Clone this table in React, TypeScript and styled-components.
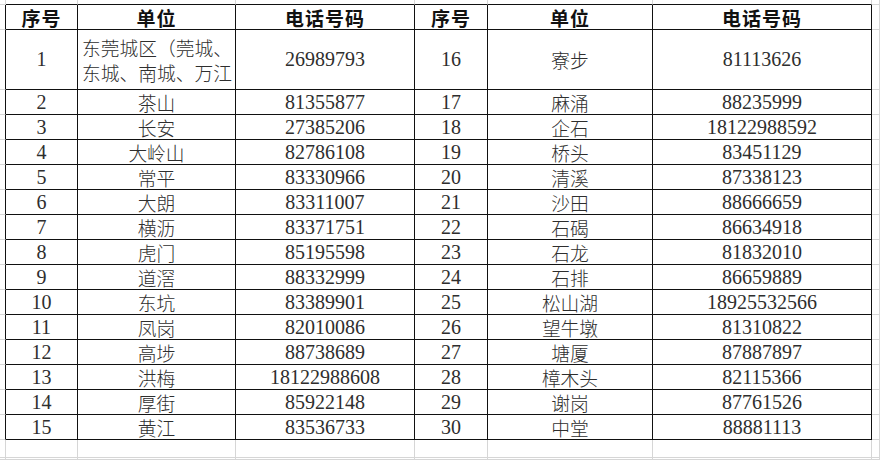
import styled, { createGlobalStyle } from "styled-components";

const GlobalStyle = createGlobalStyle`
  html, body {
    margin: 0;
    padding: 0;
    background: #ffffff;
  }
`;

type Entry = { no: number; unit: string; phone: string };

const left: Entry[] = [
  { no: 1, unit: "东莞城区（莞城、东城、南城、万江", phone: "26989793" },
  { no: 2, unit: "茶山", phone: "81355877" },
  { no: 3, unit: "长安", phone: "27385206" },
  { no: 4, unit: "大岭山", phone: "82786108" },
  { no: 5, unit: "常平", phone: "83330966" },
  { no: 6, unit: "大朗", phone: "83311007" },
  { no: 7, unit: "横沥", phone: "83371751" },
  { no: 8, unit: "虎门", phone: "85195598" },
  { no: 9, unit: "道滘", phone: "88332999" },
  { no: 10, unit: "东坑", phone: "83389901" },
  { no: 11, unit: "凤岗", phone: "82010086" },
  { no: 12, unit: "高埗", phone: "88738689" },
  { no: 13, unit: "洪梅", phone: "18122988608" },
  { no: 14, unit: "厚街", phone: "85922148" },
  { no: 15, unit: "黄江", phone: "83536733" },
];

const right: Entry[] = [
  { no: 16, unit: "寮步", phone: "81113626" },
  { no: 17, unit: "麻涌", phone: "88235999" },
  { no: 18, unit: "企石", phone: "18122988592" },
  { no: 19, unit: "桥头", phone: "83451129" },
  { no: 20, unit: "清溪", phone: "87338123" },
  { no: 21, unit: "沙田", phone: "88666659" },
  { no: 22, unit: "石碣", phone: "86634918" },
  { no: 23, unit: "石龙", phone: "81832010" },
  { no: 24, unit: "石排", phone: "86659889" },
  { no: 25, unit: "松山湖", phone: "18925532566" },
  { no: 26, unit: "望牛墩", phone: "81310822" },
  { no: 27, unit: "塘厦", phone: "87887897" },
  { no: 28, unit: "樟木头", phone: "82115366" },
  { no: 29, unit: "谢岗", phone: "87761526" },
  { no: 30, unit: "中堂", phone: "88881113" },
];

const GRID = "#d6d6d6";
const INK = "#111111";

// spreadsheet canvas: a margin column/row, six table columns, then trailing space
const Sheet = styled.div`
  display: grid;
  grid-template-columns: 6px 72px 158px 179px 73px 165px 219px 1fr;
  grid-template-rows: 5px 25px 60px repeat(14, 25px) 18px 1fr;
  width: 880px;
  height: 460px;
  overflow: hidden;
  background: #fff;
  color: #262626;
`;

const Cell = styled.div<{ $inkRight?: boolean; $inkBottom?: boolean; $align?: "left" | "center" }>`
  box-sizing: border-box;
  display: flex;
  align-items: center;
  justify-content: ${(p) => (p.$align === "left" ? "flex-start" : "center")};
  padding: ${(p) => (p.$align === "left" ? "0 0 0 4px" : "0")};
  overflow: hidden;
  border-right: 1px solid ${(p) => (p.$inkRight ? INK : GRID)};
  border-bottom: 1px solid ${(p) => (p.$inkBottom ? INK : GRID)};
`;

const Head = styled.span`
  font-family: "Noto Sans CJK SC", sans-serif;
  font-weight: 700;
  font-size: 19px;
  color: #111;
  letter-spacing: 1px;
`;

const Num = styled.span`
  font-family: "Liberation Serif", "Noto Sans CJK SC", serif;
  font-size: 20px;
  color: #2e2e2e;
`;

const Unit = styled.span<{ $wrap?: boolean }>`
  font-family: "Noto Sans CJK SC", sans-serif;
  font-weight: 300;
  font-size: 18.75px;
  line-height: 25px;
  color: #2e2e2e;
  ${(p) =>
    p.$wrap
      ? "flex: none; width: 156px; word-break: break-all; line-break: anywhere;"
      : "white-space: nowrap;"}
`;

const headers = ["序号", "单位", "电话号码", "序号", "单位", "电话号码"];

function Row({ a, b }: { a: Entry; b: Entry }) {
  const wrap = a.unit.length > 8;
  return (
    <>
      <Cell $inkRight />
      <Cell $inkRight $inkBottom>
        <Num>{a.no}</Num>
      </Cell>
      <Cell $inkRight $inkBottom $align={wrap ? "left" : "center"}>
        <Unit $wrap={wrap}>{a.unit}</Unit>
      </Cell>
      <Cell $inkRight $inkBottom>
        <Num>{a.phone}</Num>
      </Cell>
      <Cell $inkRight $inkBottom>
        <Num>{b.no}</Num>
      </Cell>
      <Cell $inkRight $inkBottom>
        <Unit>{b.unit}</Unit>
      </Cell>
      <Cell $inkRight $inkBottom>
        <Num>{b.phone}</Num>
      </Cell>
      <Cell />
    </>
  );
}

export default function App() {
  return (
    <>
      <GlobalStyle />
      <Sheet>
        {/* top margin row */}
        <Cell />
        {headers.map((_, i) => (
          <Cell key={`t${i}`} $inkBottom />
        ))}
        <Cell />

        {/* header row */}
        <Cell $inkRight />
        {headers.map((h, i) => (
          <Cell key={`h${i}`} $inkRight $inkBottom>
            <Head>{h}</Head>
          </Cell>
        ))}
        <Cell />

        {left.map((a, i) => (
          <Row key={a.no} a={a} b={right[i]} />
        ))}

        {/* empty spreadsheet rows below */}
        {Array.from({ length: 16 }).map((_, i) => (
          <Cell key={`e${i}`} />
        ))}
      </Sheet>
    </>
  );
}
